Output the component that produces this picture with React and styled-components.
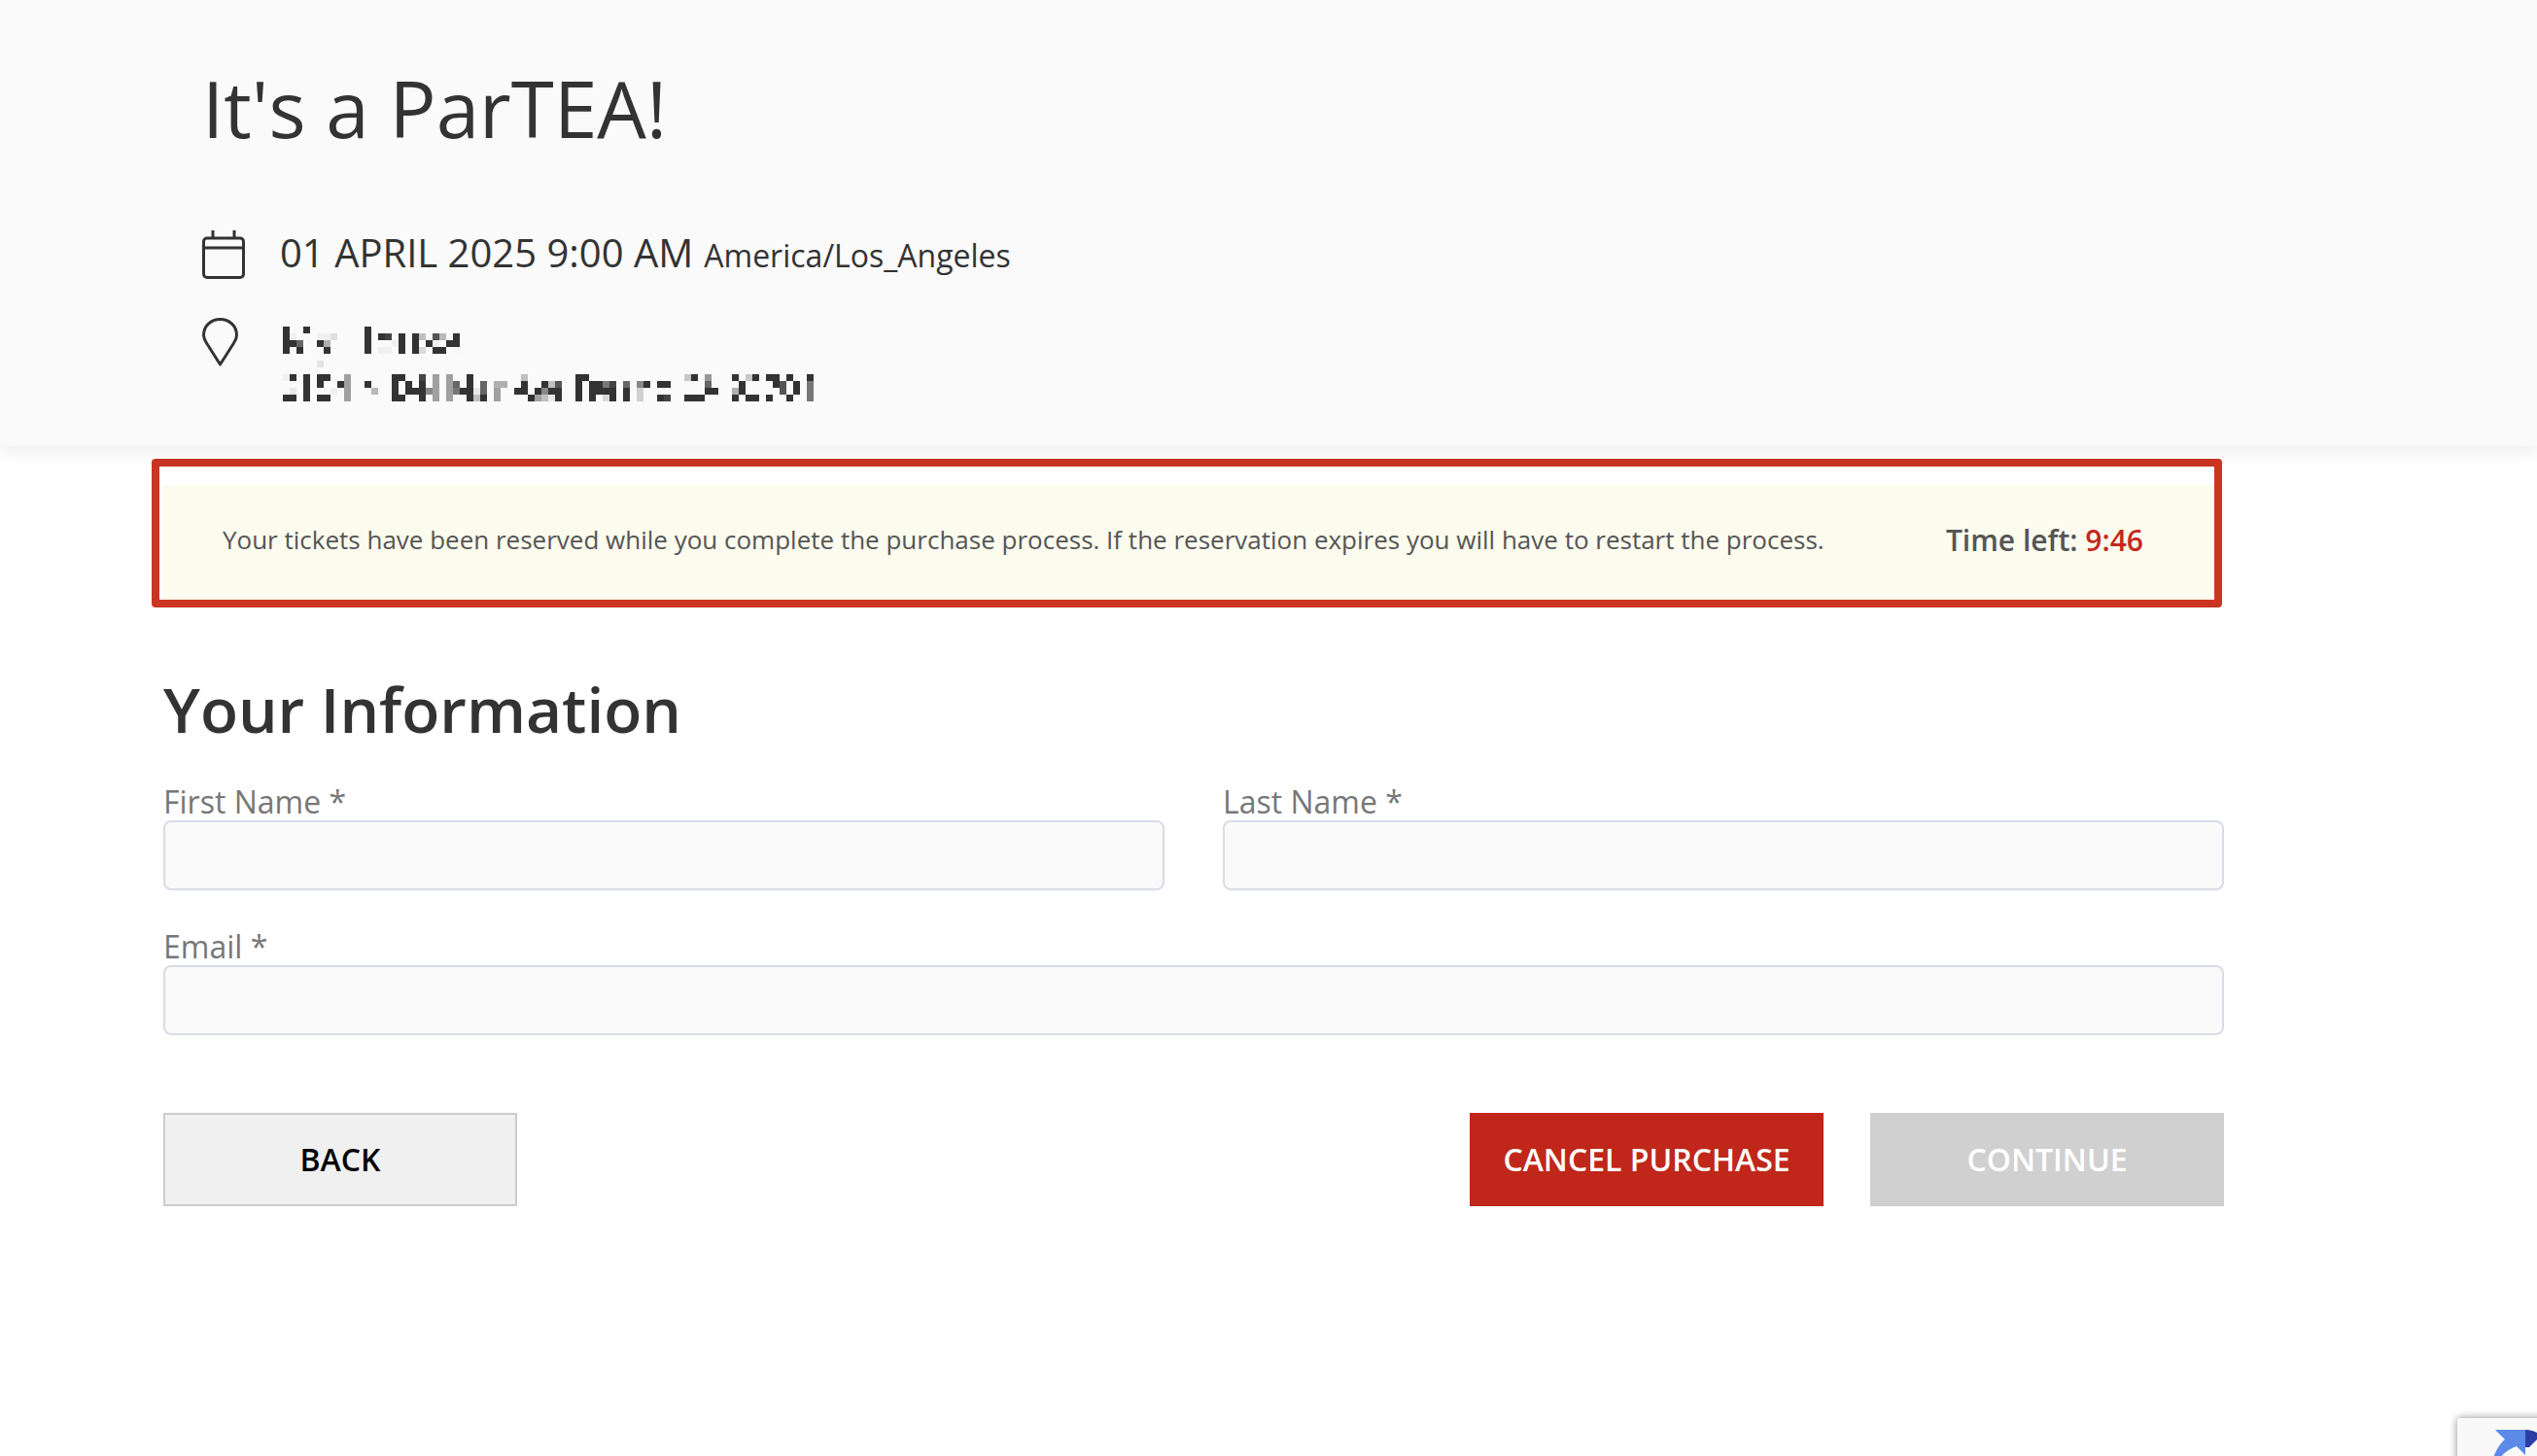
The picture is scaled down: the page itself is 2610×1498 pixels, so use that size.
import React from "react";
import styled, { createGlobalStyle } from "styled-components";

const GlobalStyle = createGlobalStyle`
  html, body {
    margin: 0;
    padding: 0;
    background: #fff;
  }
  body {
    font-family: "Open Sans", "Liberation Sans", sans-serif;
    overflow: hidden;
  }
`;

const Page = styled.div`
  width: 2610px;
  height: 1498px;
  position: relative;
  overflow: hidden;
`;

const EventHeader = styled.header`
  height: 459px;
  box-sizing: border-box;
  padding: 63px 0 0 208px;
  background: #fafafa;
  box-shadow: 0 2px 22px rgba(0, 0, 0, 0.1);
  position: relative;
`;

const Title = styled.h1`
  margin: 0;
  font-size: 80px;
  line-height: 96px;
  font-weight: 400;
  color: #333;
`;

const DateRow = styled.div`
  display: flex;
  align-items: flex-start;
  gap: 36px;
  margin-top: 78px;
  height: 50px;
`;

const DateText = styled.div`
  font-size: 40px;
  line-height: 46px;
  color: #333;
  white-space: nowrap;
`;

const Zone = styled.span`
  font-size: 32px;
  margin-left: 11px;
`;

const PlaceRow = styled.div`
  display: flex;
  align-items: flex-start;
  gap: 46px;
  margin-top: 40px;
`;

const AddressBlock = styled.div`
  padding-top: 9px;
`;

const Content = styled.main`
  padding: 13px 0 0 156px;
`;

const Banner = styled.div`
  width: 2130px;
  height: 153px;
  box-sizing: border-box;
  border: 8px solid #cb3524;
  border-radius: 4px;
  padding: 19px 0 0 4px;
`;

const BannerInner = styled.div`
  height: 118px;
  box-sizing: border-box;
  padding: 0 73px 6px 61px;
  display: flex;
  align-items: center;
  justify-content: space-between;
  background: #fbfbee;
  color: #555;
`;

const Notice = styled.div`
  font-size: 26px;
  white-space: nowrap;
`;

const TimeLeft = styled.div`
  font-size: 30px;
  font-weight: 600;
  white-space: nowrap;
`;

const Clock = styled.span`
  color: #c4281c;
`;

const Form = styled.form`
  width: 2120px;
  margin-left: 12px;
`;

const Heading = styled.h2`
  margin: 60px 0 0;
  font-size: 64px;
  line-height: 90px;
  font-weight: 600;
  color: #333;
`;

const FieldGrid = styled.div`
  display: grid;
  grid-template-columns: 1030px 1030px;
  column-gap: 60px;
  row-gap: 30px;
  margin-top: 22px;
`;

const Field = styled.label`
  display: block;
  grid-column: ${(p) => (p.$wide ? "1 / -1" : "auto")};
`;

const LabelText = styled.div`
  height: 47px;
  font-size: 32px;
  line-height: 55px;
  color: #777;
`;

const Input = styled.input`
  display: block;
  width: 100%;
  height: 72px;
  box-sizing: border-box;
  border: 2px solid #d9dce6;
  border-radius: 8px;
  background: #fafafa;
`;

const Actions = styled.div`
  display: flex;
  justify-content: space-between;
  margin-top: 80px;
`;

const ActionsRight = styled.div`
  display: flex;
  gap: 48px;
`;

const Button = styled.button`
  width: 364px;
  height: 96px;
  box-sizing: border-box;
  border: ${(p) => (p.$variant === "back" ? "2px solid #ccc" : "none")};
  background: ${(p) =>
    p.$variant === "back" ? "#f0f0f0" : p.$variant === "cancel" ? "#c0271a" : "#d0d0d0"};
  color: ${(p) => (p.$variant === "back" ? "#000" : "#fff")};
  font-family: inherit;
  font-size: 32px;
  font-weight: 600;
  padding: 0 0 2px;
`;

const CaptchaBadge = styled.div`
  position: absolute;
  left: 2528px;
  top: 1459px;
  width: 256px;
  height: 60px;
  background: #f9f9f9;
  border-radius: 3px;
  box-shadow: 0 0 8px rgba(0, 0, 0, 0.45);
`;

const CaptchaIcon = styled.svg`
  position: absolute;
  left: 30px;
  top: 8px;
`;

const CalendarIcon = () => (
  <svg width="44" height="50" viewBox="0 0 44 50" fill="none" stroke="#333" strokeWidth="3">
    <rect x="1.5" y="8" width="41" height="40.5" rx="3.5" />
    <path d="M1.5 18H42.5M11 0V8M33 0V8" />
  </svg>
);

const PinIcon = () => (
  <svg width="37" height="50" viewBox="0 0 37 50" fill="none" stroke="#333" strokeWidth="3" strokeLinejoin="round">
    <path d="M18.5 48 L4.5 26 C2.5 23 1.5 20 1.5 18 C1.5 8.5 9 1.5 18.5 1.5 C28 1.5 35.5 8.5 35.5 18 C35.5 20 34.5 23 32.5 26 Z" />
  </svg>
);

// cells of the pixelated address: [column, row, shade]
const D = "#333";
const nameCells = [
  [0,0,D],[0,1,D],[0,2,D],[0,3,D],[1,1,"#eee"],[1,2,D],[2,2,"#666"],[2,3,D],[3,0,D],
  [5,1,"#f0f0f0"],[5,2,D],[6,1,"#f0f0f0"],[6,2,"#b0b0b0"],[6,3,D],[7,1,"#e0e0e0"],
  [12,0,D],[12,1,D],[12,2,D],[12,3,D],[14,1,D],[14,3,"#f0f0f0"],[15,1,"#444"],[15,3,"#f0f0f0"],
  [16,2,"#f0f0f0"],[17,1,D],[17,2,D],[17,3,D],[19,1,D],[19,2,D],[19,3,D],[20,1,"#c0c0c0"],
  [20,3,"#d8d8d8"],[21,2,D],[22,1,"#555"],[22,2,"#f0f0f0"],[22,3,D],[23,1,"#b8b8b8"],[23,3,D],
  [24,2,D],[25,1,D],[25,2,D],[25,3,"#f8f8f8"],
];
const addressCells = [
  [5,-2,"#e4e4e4"],
  [0,0,"#f0f0f0"],[0,3,D],[1,0,D],[1,2,"#e8e8e8"],[1,3,D],[3,0,D],[3,1,D],[3,2,D],[3,3,D],
  [5,0,D],[5,1,D],[5,3,D],[6,0,D],[6,3,D],[7,2,"#f0f0f0"],[8,1,D],[9,0,"#a0a0a0"],[9,1,"#a0a0a0"],
  [9,2,"#a0a0a0"],[9,3,"#a0a0a0"],[12,1,D],[13,2,"#b8b8b8"],[16,0,D],[16,1,D],[16,2,D],[16,3,D],
  [17,0,D],[17,3,D],[18,1,D],[18,2,D],[19,2,D],[20,0,"#444"],[20,1,D],[20,2,D],[20,3,D],[21,2,"#888"],
  [22,0,"#a0a0a0"],[22,1,"#a0a0a0"],[22,2,"#a0a0a0"],[22,3,"#a0a0a0"],[24,0,"#a0a0a0"],[24,1,"#a0a0a0"],
  [24,2,"#a0a0a0"],[24,3,"#a0a0a0"],[25,1,"#666"],[25,2,"#777"],[26,2,D],[27,0,D],[27,1,D],[27,2,D],[27,3,D],
  [28,2,"#e8e8e8"],[28,3,"#c0c0c0"],[29,1,"#666"],[29,2,"#666"],[29,3,D],[31,1,"#b0b0b0"],[31,2,"#a0a0a0"],
  [31,3,"#a0a0a0"],[32,1,"#b0b0b0"],[34,2,D],[35,0,"#c0c0c0"],[35,1,D],[35,2,D],[36,3,D],[37,2,D],
  [37,3,"#a0a0a0"],[38,1,D],[38,2,"#888"],[38,3,"#c0c0c0"],[39,1,"#c0c0c0"],[39,2,D],[39,3,"#e8e8e8"],
  [40,1,"#555"],[40,2,D],[40,3,D],[43,0,D],[43,1,D],[43,2,D],[43,3,D],[44,0,D],[45,1,D],[45,2,D],[45,3,D],
  [46,1,"#333"],[46,2,D],[47,1,"#777"],[47,2,D],[47,3,"#d8d8d8"],[48,1,"#444"],[48,2,D],[48,3,D],
  [50,1,"#666"],[50,2,D],[50,3,D],[52,1,"#888"],[52,2,"#d0d0d0"],[52,3,"#d0d0d0"],[53,1,D],
  [55,1,D],[55,3,D],[56,1,D],[56,3,"#444"],[59,0,"#c8c8c8"],[59,3,D],[60,0,D],[60,3,D],[61,3,D],
  [62,0,"#999"],[62,1,"#666"],[62,2,D],[63,2,D],[66,0,D],[66,2,"#b0b0b0"],[66,3,D],[67,1,D],[67,2,D],
  [68,0,"#c8c8c8"],[68,3,D],[69,0,D],[69,3,D],[71,0,D],[71,3,D],[72,0,D],[72,1,D],[73,1,"#555"],[73,2,"#555"],
  [74,0,D],[74,3,D],[75,1,D],[75,2,D],[77,0,D],[77,1,"#777"],[77,2,"#777"],[77,3,"#777"],
];

const Mosaic = ({ cells, offsetY }) => (
  <g transform={`translate(0 ${offsetY})`}>
    {cells.map(([c, r, fill]) => (
      <rect key={`${c}-${r}`} x={c * 7} y={r * 7} width="7" height="7" fill={fill} />
    ))}
  </g>
);

const RedactedAddress = () => (
  <svg width="560" height="77" viewBox="0 0 560 77" shapeRendering="crispEdges" style={{ display: "block" }}>
    <Mosaic cells={nameCells} offsetY={0} />
    <Mosaic cells={addressCells} offsetY={49} />
  </svg>
);

const EventInfo = () => (
  <EventHeader>
    <Title>It's a ParTEA!</Title>
    <DateRow>
      <CalendarIcon />
      <DateText>
        01 APRIL 2025 9:00 AM<Zone>America/Los_Angeles</Zone>
      </DateText>
    </DateRow>
    <PlaceRow>
      <PinIcon />
      <AddressBlock>
        <RedactedAddress />
      </AddressBlock>
    </PlaceRow>
  </EventHeader>
);

export default function App() {
  return (
    <Page>
      <GlobalStyle />
      <EventInfo />
      <Content>
        <Banner>
          <BannerInner>
            <Notice>
              Your tickets have been reserved while you complete the purchase process. If the reservation expires you will have to restart the process.
            </Notice>
            <TimeLeft>
              Time left: <Clock>9:46</Clock>
            </TimeLeft>
          </BannerInner>
        </Banner>
        <Form>
          <Heading>Your Information</Heading>
          <FieldGrid>
            <Field>
              <LabelText>First Name *</LabelText>
              <Input type="text" />
            </Field>
            <Field>
              <LabelText>Last Name *</LabelText>
              <Input type="text" />
            </Field>
            <Field $wide>
              <LabelText>Email *</LabelText>
              <Input type="text" />
            </Field>
          </FieldGrid>
          <Actions>
            <Button type="button" $variant="back">BACK</Button>
            <ActionsRight>
              <Button type="button" $variant="cancel">CANCEL PURCHASE</Button>
              <Button type="button" $variant="continue">CONTINUE</Button>
            </ActionsRight>
          </Actions>
        </Form>
      </Content>
      <CaptchaBadge>
        <CaptchaIcon width="60" height="40" viewBox="0 0 60 40">
          <path d="M9 4H40V30L31 21C22 24 14 30 10 40H5C8 27 14 18 19 14Z" fill="#5b8ae8" />
          <path d="M40 4C46 4 52 6 56 10L44 22H40Z" fill="#2a3fa5" />
        </CaptchaIcon>
      </CaptchaBadge>
    </Page>
  );
}
